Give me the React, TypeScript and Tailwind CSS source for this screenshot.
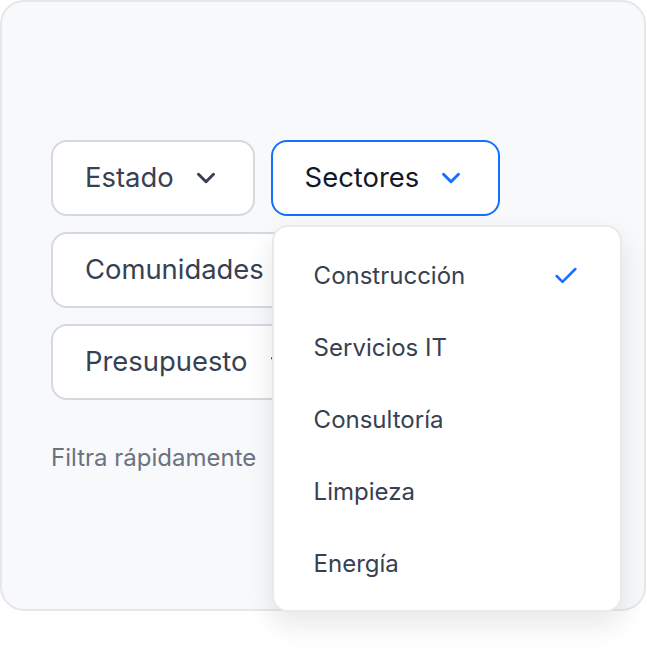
import { ChevronDown, Check } from "lucide-react";

const SECTORS = ["Construcción", "Servicios IT", "Consultoría", "Limpieza", "Energía"];

function FilterButton({ label, active = false }: { label: string; active?: boolean }) {
    return (
        <button
            className={`flex items-center gap-[17px] h-[76px] px-8 rounded-[16px] border-2 bg-white text-[27.4px] ${
                active ? "border-[#1570ff] text-[#111827]" : "border-[#d5d8de] text-[#374151]"
            }`}
        >
            <span>{label}</span>
            <ChevronDown
                size={30}
                strokeWidth={2.4}
                className={active ? "text-[#1570ff]" : "text-[#374151]"}
            />
        </button>
    );
}

export default function App() {
    return (
        <div className="bg-white min-h-screen" style={{ fontFamily: "Inter, 'Noto Sans', sans-serif" }}>
            <div className="relative w-[646px] h-[611px] rounded-[24px] border-2 border-[#e5e7eb] bg-[#f8f9fb] pt-[138px] pl-[49px]">
                <div className="flex flex-col gap-4 items-start">
                    <div className="flex gap-4">
                        <FilterButton label="Estado" />
                        <div className="relative">
                            <FilterButton label="Sectores" active />
                            <div className="absolute z-10 left-[1px] top-[85px] w-[350px] rounded-[16px] border-2 border-[#e9eaee] bg-white pt-[13px] pb-[10px] shadow-[0_12px_28px_rgba(17,24,39,0.10)]">
                                {SECTORS.map((s, idx) => (
                                    <div key={s} className="flex items-center justify-between h-[72px] px-10 text-[24px] text-[#374151]">
                                        <span>{s}</span>
                                        {idx === 0 && <Check size={28} strokeWidth={2.2} className="text-[#1570ff]" />}
                                    </div>
                                ))}
                            </div>
                        </div>
                    </div>
                    <FilterButton label="Comunidades" />
                    <FilterButton label="Presupuesto" />
                </div>
                <p className="mt-[42px] text-[24px] leading-8 text-[#6b7280]">Filtra rápidamente</p>
            </div>
        </div>
    );
}
